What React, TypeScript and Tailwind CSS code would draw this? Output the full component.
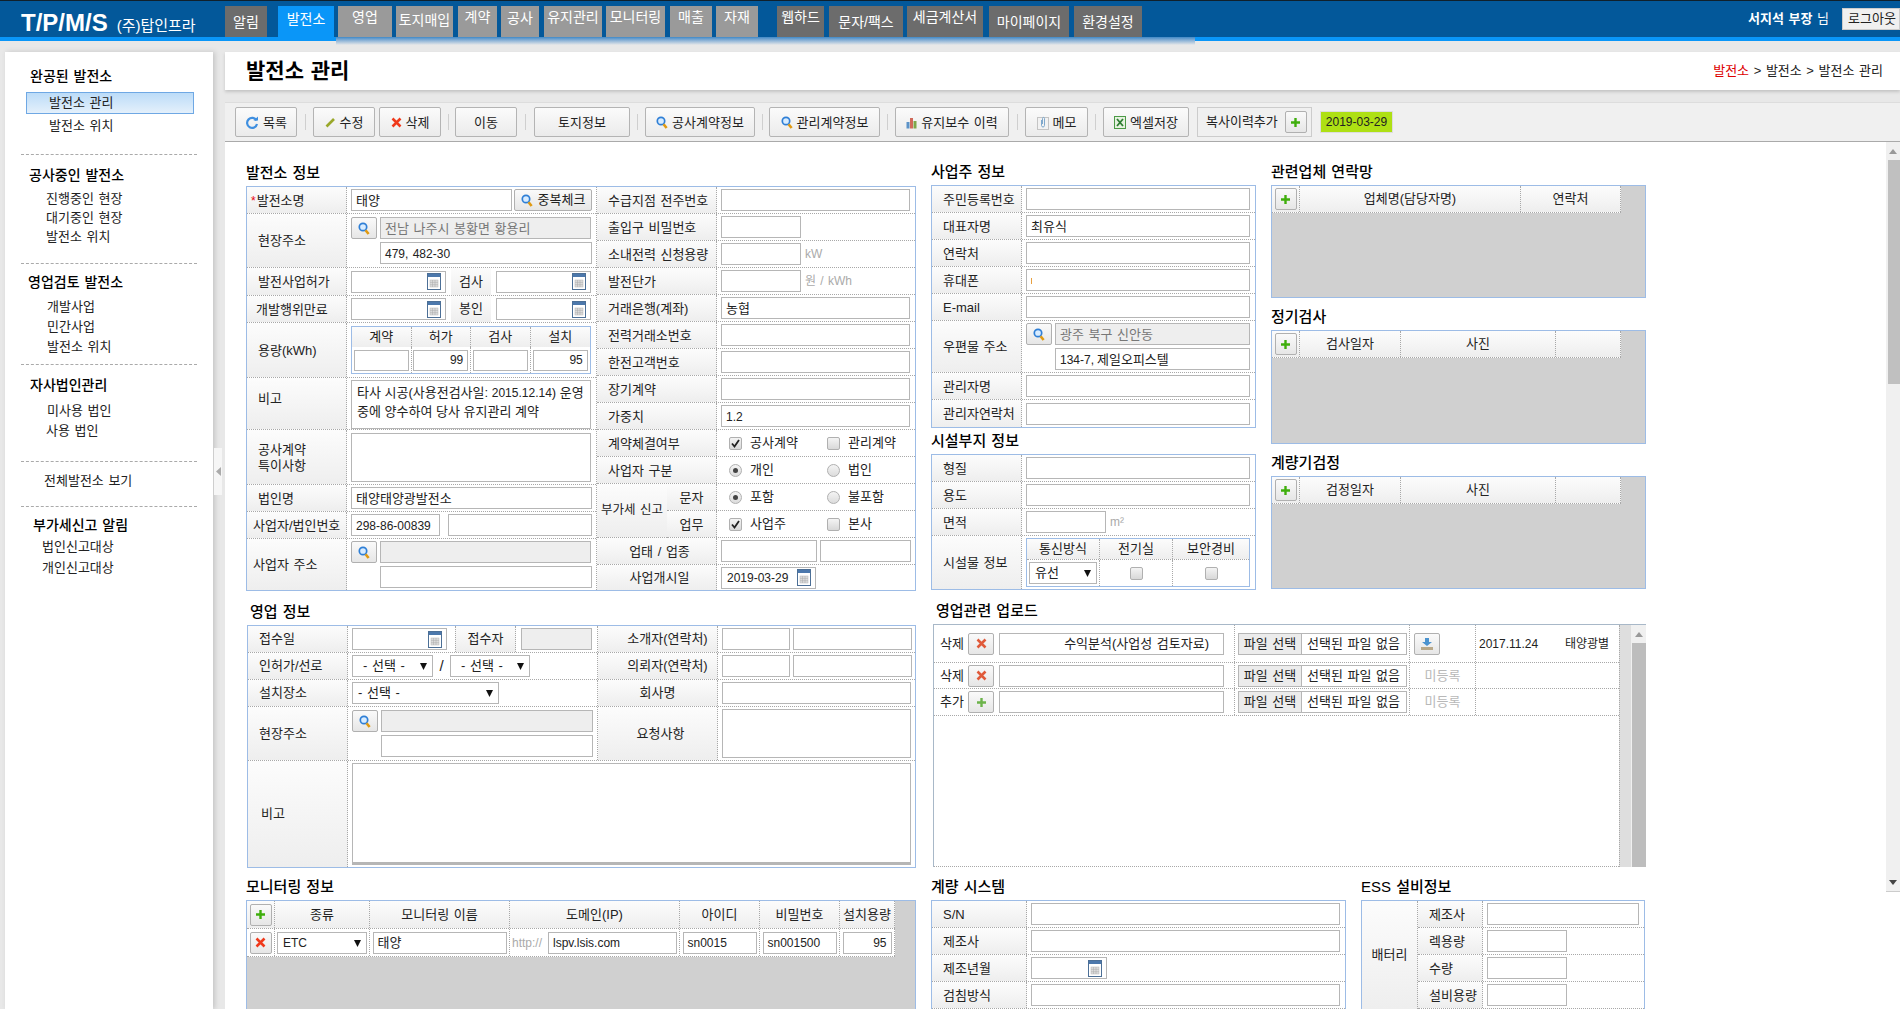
import type { ReactNode } from "react";

const label = "bg-gradient-to-b from-[#fcfcfc] to-[#eeeeee]";
const dot = "border-dotted border-[#a8a8a8]";

const Mag = () => (
  <svg width="12" height="13" viewBox="0 0 12 13" className="shrink-0">
    <circle cx="5" cy="5" r="3.7" fill="#d8ecff" stroke="#2f7fd6" strokeWidth="1.7" />
    <path d="M7.6 8.2 L10.6 12" stroke="#e09a12" strokeWidth="2.6" />
  </svg>
);

const Cal = () => (
  <svg width="14" height="17" viewBox="0 0 14 17" className="shrink-0">
    <rect x="0.5" y="0.5" width="13" height="16" fill="#fff" stroke="#4c6f96" />
    <rect x="1" y="1" width="12" height="3" fill="#4c78ac" />
    <rect x="3" y="7" width="8" height="7" fill="#dcdcdc" stroke="#b5b5b5" strokeWidth="0.5" />
    <path d="M5.5 7V14M8 7V14M3 9.4H11M3 11.7H11" stroke="#aaa" strokeWidth="0.5" />
  </svg>
);

const Plus = ({ c = "#3fae0c" }: { c?: string }) => (
  <svg width="11" height="11" viewBox="0 0 11 11">
    <path d="M5.5 1V10M1 5.5H10" stroke={c} strokeWidth="2.4" />
  </svg>
);

const Xx = ({ c = "#f0391b" }: { c?: string }) => (
  <svg width="11" height="11" viewBox="0 0 11 11">
    <path d="M1.5 1.5L9.5 9.5M9.5 1.5L1.5 9.5" stroke={c} strokeWidth="2.5" />
  </svg>
);

const Arrow = () => (
  <svg width="7" height="8" viewBox="0 0 7 8" className="shrink-0">
    <path d="M0 1H7L3.5 8Z" fill="#111" />
  </svg>
);

const Chk = ({ on }: { on?: boolean }) => (
  <div className="w-[13px] h-[13px] rounded-[2px] border border-[#b0b0b0] bg-gradient-to-b from-[#f4f4f4] to-[#d8d8d8] flex items-center justify-center">
    {on && (
      <svg width="9" height="9" viewBox="0 0 9 9">
        <path d="M1 4.5L3.5 7.5L8 1" fill="none" stroke="#222" strokeWidth="1.8" />
      </svg>
    )}
  </div>
);

const Rad = ({ on }: { on?: boolean }) => (
  <div className="w-[13px] h-[13px] rounded-full border border-[#b0b0b0] bg-gradient-to-b from-[#f4f4f4] to-[#dcdcdc] flex items-center justify-center">
    {on && <div className="w-[5px] h-[5px] rounded-full bg-[#444]" />}
  </div>
);

function Inp({ w = "flex-1", cls = "", children }: { w?: string; cls?: string; children?: ReactNode }) {
  return (
    <div className={`${w} ${cls} h-[22px] shrink-0 border border-[#b6b6b6] bg-white flex items-center px-[4px] pt-px whitespace-nowrap overflow-hidden`}>
      {children}
    </div>
  );
}

function DateInp({ w, text }: { w: string; text?: string }) {
  return (
    <div className={`${w} h-[22px] shrink-0 border border-[#b6b6b6] bg-white flex items-center justify-between pl-[5px] pr-[4px] text-xs`}>
      <span>{text}</span>
      <Cal />
    </div>
  );
}

function Sel({ w, children }: { w: string; children?: ReactNode }) {
  return (
    <div className={`${w} h-[22px] shrink-0 border border-[#b6b6b6] bg-white flex items-center justify-between pl-[5px] pr-[5px]`}>
      <span>{children}</span>
      <Arrow />
    </div>
  );
}

function IconBtn({ w = "w-[26px]", children }: { w?: string; children?: ReactNode }) {
  return (
    <div className={`${w} h-[22px] shrink-0 border border-[#b0b0b0] rounded-[2px] bg-gradient-to-b from-[#fafafa] to-[#e6e6e6] flex items-center justify-center gap-[5px]`}>
      {children}
    </div>
  );
}

function Row({ name, cols, h = "h-[27px]", lc = "pl-[11px]", last, children }: { name?: ReactNode; cols: string; h?: string; lc?: string; last?: boolean; children?: ReactNode }) {
  return (
    <div className={`grid ${cols} ${h} ${last ? "" : `border-b ${dot}`}`}>
      <div className={`flex items-center pt-px whitespace-nowrap ${lc} ${label} border-r ${dot}`}>{name}</div>
      <div className="flex items-center pl-[4px] pr-[5px] min-w-0">{children}</div>
    </div>
  );
}

function Title({ children, cls = "" }: { children: ReactNode; cls?: string }) {
  return <div className={`h-[26px] flex items-center text-[15px] font-medium text-black ${cls}`}>{children}</div>;
}

const Gray = ({ children }: { children: ReactNode }) => <span className="text-[#aaaaaa] text-xs ml-[4px]">{children}</span>;

const tabs = [
  { t: "알림", c: "w-[42px] ml-[225px] bg-[#6c6c6c] pt-[6px]" },
  { t: "발전소", c: "w-[56px] ml-[11px] bg-[#0a96f8] pt-[3px]" },
  { t: "영업", c: "w-[54px] ml-[4px] bg-[#9a9a9a] pt-[1px]" },
  { t: "토지매입", c: "w-[57px] ml-[4px] bg-[#9a9a9a] pt-[4px]" },
  { t: "계약", c: "w-[39px] ml-[5px] bg-[#9a9a9a] pt-[1px]" },
  { t: "공사", c: "w-[38px] ml-[4px] bg-[#9a9a9a] pt-[2px]" },
  { t: "유지관리", c: "w-[58px] ml-[5px] bg-[#9a9a9a] pt-[1px]" },
  { t: "모니터링", c: "w-[59px] ml-[4px] bg-[#9a9a9a] pt-[1px]" },
  { t: "매출", c: "w-[42px] ml-[5px] bg-[#9a9a9a] pt-[1px]" },
  { t: "자재", c: "w-[42px] ml-[4px] bg-[#9a9a9a] pt-[1px]" },
  { t: "웹하드", c: "w-[47px] ml-[19px] bg-[#6c6c6c] pt-[1px]" },
  { t: "문자/팩스", c: "w-[74px] ml-[5px] bg-[#6c6c6c] pt-[6px]" },
  { t: "세금계산서", c: "w-[76px] ml-[4px] bg-[#6c6c6c] pt-[1px]" },
  { t: "마이페이지", c: "w-[80px] ml-[6px] bg-[#6c6c6c] pt-[6px]" },
  { t: "환경설정", c: "w-[68px] ml-[5px] bg-[#6c6c6c] pt-[6px]" },
];

const Sep = ({ w }: { w: string }) => (
  <div className={`${w} flex justify-center`}>
    <div className="w-px h-[16px] bg-[#cfcfcf]" />
  </div>
);

function Tb({ w, icon, children }: { w: string; icon?: ReactNode; children: ReactNode }) {
  return (
    <div className={`${w} h-[30px] shrink-0 border border-[#b4b4b4] rounded-[2px] bg-gradient-to-b from-[#fbfbfb] to-[#ebebeb] flex items-center justify-center gap-[4px] pt-px whitespace-nowrap`}>
      {icon}
      {children}
    </div>
  );
}

function Side({ cls, children }: { cls: string; children: ReactNode }) {
  return <div className={`h-[20px] flex items-center whitespace-nowrap ${cls}`}>{children}</div>;
}

function Head({ cls, children }: { cls: string; children: ReactNode }) {
  return <div className={`h-[20px] flex items-center whitespace-nowrap text-[14px] font-medium text-black ${cls}`}>{children}</div>;
}

const Dash = ({ cls }: { cls: string }) => <div className={`mx-[16px] border-t border-dashed border-[#aaaaaa] ${cls}`} />;

const A = "grid-cols-[100px_1fr]";
const R = "grid-cols-[120px_1fr]";
const B = "grid-cols-[90px_1fr]";

function PlantInfo() {
  return (
    <div className="w-[670px]">
      <Title>발전소 정보</Title>
      <div className="border border-[#9dbce6] bg-white flex">
        <div className="w-[350px] border-r border-dotted border-[#a8a8a8]">
          <Row cols={A} lc="pl-[4px]" name={<><span className="text-red-600 text-xs mr-px">*</span>발전소명</>}>
            <Inp w="w-[161px]">태양</Inp>
            <div className="ml-[2px]">
              <IconBtn w="w-[78px]"><Mag />중복체크</IconBtn>
            </div>
          </Row>
          <Row cols={A} h="h-[54px]" name="현장주소">
            <div className="flex flex-col gap-[3px] w-full">
              <div className="flex gap-[3px]">
                <IconBtn><Mag /></IconBtn>
                <Inp cls="!bg-[#eeeeee] text-[#777777]">전남 나주시 봉황면 황용리</Inp>
              </div>
              <Inp w="w-[212px]" cls="ml-[29px] text-xs">479, 482-30</Inp>
            </div>
          </Row>
          <Row cols={A} h="h-[28px]" name="발전사업허가">
            <DateInp w="w-[95px]" />
            <div className={`w-[41px] ml-[5px] h-full flex items-center justify-center ${label}`}>검사</div>
            <div className="ml-[5px]"><DateInp w="w-[95px]" /></div>
          </Row>
          <Row cols={A} lc="pl-[9px]" name="개발행위만료">
            <DateInp w="w-[95px]" />
            <div className={`w-[41px] ml-[5px] h-full flex items-center justify-center ${label}`}>봉인</div>
            <div className="ml-[5px]"><DateInp w="w-[95px]" /></div>
          </Row>
          <Row cols={A} h="h-[55px]" name="용량(kWh)">
            <div className="w-[241px] h-[48px] border border-[#9dbce6]">
              <div className={`grid grid-cols-4 h-[20px] border-b ${dot}`}>
                {["계약", "허가", "검사", "설치"].map((t, i) => (
                  <div key={t} className={`flex items-center justify-center ${label} ${i < 3 ? `border-r ${dot}` : ""}`}>{t}</div>
                ))}
              </div>
              <div className="grid grid-cols-4 h-[26px]">
                {["", "99", "", "95"].map((t, i) => (
                  <div key={i} className={`flex items-center justify-center ${i < 3 ? `border-r ${dot}` : ""}`}>
                    <div className="w-[55px] h-[21px] border border-[#b6b6b6] text-xs text-right pr-[4px] leading-[19px]">{t}</div>
                  </div>
                ))}
              </div>
            </div>
          </Row>
          <Row cols={A} h="h-[52px]" name={<span className="-mt-[10px]">비고</span>}>
            <div className="w-[243px] h-[49px] border border-[#b6b6b6] px-[5px] leading-[19px] pt-[2px] whitespace-nowrap overflow-hidden mt-[2px] [word-spacing:0]">
              타사 시공(사용전검사일: <span className="text-xs">2015.12.14</span>) 운영
              <br />
              중에 양수하여 당사 유지관리 계약
            </div>
          </Row>
          <Row cols={A} h="h-[55px]" name={<span className="leading-[16px]">공사계약<br />특이사항</span>}>
            <div className="w-[243px] h-[49px] border border-[#b6b6b6]" />
          </Row>
          <Row cols={A} name="법인명"><Inp w="w-[241px]">태양태양광발전소</Inp></Row>
          <Row cols={A} lc="pl-[6px]" name="사업자/법인번호">
            <Inp w="w-[89px]" cls="text-xs">298-86-00839</Inp>
            <Inp w="w-[144px]" cls="ml-[8px]" />
          </Row>
          <Row cols={A} h="h-[51px]" lc="pl-[6px]" last name="사업자 주소">
            <div className="flex flex-col gap-[3px] w-full">
              <div className="flex gap-[3px]">
                <IconBtn><Mag /></IconBtn>
                <Inp cls="!bg-[#eeeeee]" />
              </div>
              <Inp w="w-[212px]" cls="ml-[29px]" />
            </div>
          </Row>
        </div>
        <div className="w-[318px]">
          <Row cols={R} name="수급지점 전주번호"><Inp /></Row>
          <Row cols={R} name="출입구 비밀번호"><Inp w="w-[80px]" /></Row>
          <Row cols={R} name="소내전력 신청용량"><Inp w="w-[80px]" /><Gray>kW</Gray></Row>
          <Row cols={R} name="발전단가"><Inp w="w-[80px]" /><Gray>원 / kWh</Gray></Row>
          <Row cols={R} name="거래은행(계좌)"><Inp>농협</Inp></Row>
          <Row cols={R} name="전력거래소번호"><Inp /></Row>
          <Row cols={R} name="한전고객번호"><Inp /></Row>
          <Row cols={R} name="장기계약"><Inp /></Row>
          <Row cols={R} name="가중치"><Inp cls="text-xs">1.2</Inp></Row>
          <Row cols={R} name="계약체결여부">
            <div className="ml-[8px]"><Chk on /></div>
            <span className="ml-[8px] w-[77px]">공사계약</span>
            <Chk />
            <span className="ml-[8px]">관리계약</span>
          </Row>
          <Row cols={R} name="사업자 구분">
            <div className="ml-[8px]"><Rad on /></div>
            <span className="ml-[8px] w-[77px]">개인</span>
            <Rad />
            <span className="ml-[8px]">법인</span>
          </Row>
          <div className="flex">
            <div className={`w-[70px] h-[54px] flex items-center pl-[4px] whitespace-nowrap ${label} border-b ${dot} text-[12.5px]`}>부가세 신고</div>
            <div className="flex-1">
              <Row cols="grid-cols-[50px_1fr]" lc="justify-center" name="문자">
                <div className="ml-[8px]"><Rad on /></div>
                <span className="ml-[8px] w-[77px]">포함</span>
                <Rad />
                <span className="ml-[8px]">불포함</span>
              </Row>
              <Row cols="grid-cols-[50px_1fr]" lc="justify-center" name="업무">
                <div className="ml-[8px]"><Chk on /></div>
                <span className="ml-[8px] w-[77px]">사업주</span>
                <Chk />
                <span className="ml-[8px]">본사</span>
              </Row>
            </div>
          </div>
          <Row cols={R} lc="justify-center pl-[6px]" name="업태 / 업종">
            <Inp w="w-[96px]" />
            <Inp w="w-[91px]" cls="ml-[3px]" />
          </Row>
          <Row cols={R} h="h-[25px]" lc="justify-center pl-[6px]" last name="사업개시일">
            <DateInp w="w-[95px]" text="2019-03-29" />
          </Row>
        </div>
      </div>
    </div>
  );
}

function OwnerInfo() {
  return (
    <div className="w-[325px] ml-[15px] -mt-px">
      <Title>사업주 정보</Title>
      <div className="border border-[#9dbce6] bg-white">
        <Row cols={B} name="주민등록번호"><Inp /></Row>
        <Row cols={B} name="대표자명"><Inp>최유식</Inp></Row>
        <Row cols={B} name="연락처"><Inp /></Row>
        <Row cols={B} name="휴대폰"><Inp><span className="w-px h-[6px] bg-[#e8a040]" /></Inp></Row>
        <Row cols={B} name="E-mail"><Inp /></Row>
        <Row cols={B} h="h-[52px]" name="우편물 주소">
          <div className="flex flex-col gap-[3px] w-full">
            <div className="flex gap-[3px]">
              <IconBtn><Mag /></IconBtn>
              <Inp cls="!bg-[#eeeeee] text-[#777777]">광주 북구 신안동</Inp>
            </div>
            <Inp w="w-[195px]" cls="ml-[29px]"><span className="text-xs mr-[3px]">134-7,</span>제일오피스텔</Inp>
          </div>
        </Row>
        <Row cols={B} name="관리자명"><Inp /></Row>
        <Row cols={B} last name="관리자연락처"><Inp /></Row>
      </div>
      <Title>시설부지 정보</Title>
      <div className="border border-[#9dbce6] bg-white">
        <Row cols={B} name="형질"><Inp /></Row>
        <Row cols={B} name="용도"><Inp /></Row>
        <Row cols={B} name="면적"><Inp w="w-[80px]" /><Gray>m²</Gray></Row>
        <Row cols={B} h="h-[53px]" last name="시설물 정보">
          <div className="w-[224px] h-[49px] border border-[#9dbce6]">
            <div className={`grid grid-cols-[73px_73px_1fr] h-[21px] border-b ${dot}`}>
              {["통신방식", "전기실", "보안경비"].map((t, i) => (
                <div key={t} className={`flex items-center justify-center ${label} ${i < 2 ? `border-r ${dot}` : ""}`}>{t}</div>
              ))}
            </div>
            <div className="grid grid-cols-[73px_73px_1fr] h-[26px]">
              <div className={`flex items-center justify-center border-r ${dot}`}><Sel w="w-[68px]">유선</Sel></div>
              <div className={`flex items-center justify-center border-r ${dot}`}><Chk /></div>
              <div className="flex items-center justify-center"><Chk /></div>
            </div>
          </div>
        </Row>
      </div>
    </div>
  );
}

function Contact({ title, cols, heads, h, cls = "" }: { title: string; cols: string; heads: string[]; h: string; cls?: string }) {
  return (
    <div className={cls}>
      <Title>{title}</Title>
      <div className={`border border-[#9dbce6] bg-[#d0d0d0] ${h}`}>
        <div className={`grid ${cols} w-[349px] h-[27px] bg-white border-b ${dot}`}>
          <div className={`flex items-center justify-center ${label} border-r ${dot}`}>
            <IconBtn w="w-[22px]"><Plus /></IconBtn>
          </div>
          {heads.map((t, i) => (
            <div key={i} className={`flex items-center justify-center ${label} border-r ${dot}`}>{t}</div>
          ))}
        </div>
      </div>
    </div>
  );
}

function SalesInfo() {
  const C = "grid-cols-[100px_250px_120px_1fr]";
  const cell = "flex items-center pl-[4px] pr-[4px] min-w-0";
  const name = `flex items-center whitespace-nowrap ${label} border-r ${dot}`;
  return (
    <div className="w-[670px] pl-px">
      <Title cls="pl-[3px]">영업 정보</Title>
      <div className="border border-[#9dbce6] bg-white">
        <div className={`grid ${C} h-[27px] border-b ${dot}`}>
          <div className={`${name} pl-[11px]`}>접수일</div>
          <div className={`${cell} border-r ${dot}`}>
            <DateInp w="w-[95px]" />
            <div className={`w-[61px] ml-[8px] h-full flex items-center justify-center ${label} border-x ${dot}`}>접수자</div>
            <Inp w="w-[71px]" cls="ml-[5px] !bg-[#eeeeee]" />
          </div>
          <div className={`${name} justify-center pl-[20px]`}>소개자(연락처)</div>
          <div className={cell}><Inp w="w-[68px]" /><Inp w="w-[119px]" cls="ml-[3px]" /></div>
        </div>
        <div className={`grid ${C} h-[27px] border-b ${dot}`}>
          <div className={`${name} pl-[11px]`}>인허가/선로</div>
          <div className={`${cell} border-r ${dot}`}>
            <Sel w="w-[81px]"><span className="pl-[5px]">- 선택 -</span></Sel>
            <span className="w-[17px] text-center text-[15px]">/</span>
            <Sel w="w-[80px]"><span className="pl-[5px]">- 선택 -</span></Sel>
          </div>
          <div className={`${name} justify-center pl-[20px]`}>의뢰자(연락처)</div>
          <div className={cell}><Inp w="w-[68px]" /><Inp w="w-[119px]" cls="ml-[3px]" /></div>
        </div>
        <div className={`grid ${C} h-[27px] border-b ${dot}`}>
          <div className={`${name} pl-[11px]`}>설치장소</div>
          <div className={`${cell} border-r ${dot}`}><Sel w="w-[147px]">- 선택 -</Sel></div>
          <div className={`${name} justify-center`}>회사명</div>
          <div className={cell}><Inp /></div>
        </div>
        <div className={`grid ${C} h-[54px] border-b ${dot}`}>
          <div className={`${name} pl-[11px]`}>현장주소</div>
          <div className={`${cell} border-r ${dot}`}>
            <div className="flex flex-col gap-[3px] w-full">
              <div className="flex gap-[3px]">
                <IconBtn><Mag /></IconBtn>
                <Inp cls="!bg-[#eeeeee]" />
              </div>
              <Inp w="w-[212px]" cls="ml-[29px]" />
            </div>
          </div>
          <div className={`${name} justify-center pl-[6px]`}>요청사항</div>
          <div className={cell}><div className="w-full h-[49px] border border-[#b6b6b6]" /></div>
        </div>
        <div className="grid grid-cols-[100px_1fr] h-[106px]">
          <div className={`${name} pl-[13px]`}>비고</div>
          <div className="pl-[4px] pr-[4px] pt-[2px]">
            <div className="h-[102px] border border-[#b6b6b6] border-b-[3px]" />
          </div>
        </div>
      </div>
    </div>
  );
}

function Upload() {
  const C = "grid-cols-[301px_175px_66px_1fr]";
  const FilePick = () => (
    <div className="flex h-[22px] w-[169px] border border-[#b6b6b6] whitespace-nowrap">
      <div className="w-[63px] bg-[#ececec] border-r border-[#b6b6b6] flex items-center justify-center">파일 선택</div>
      <div className="flex-1 flex items-center pl-[5px]">선택된 파일 없음</div>
    </div>
  );
  const rows = [
    { h: "h-[38px]", t: "삭제", i: <Xx c="#e05a3a" />, v: "수익분석(사업성 검토자료)" },
    { h: "h-[26px]", t: "삭제", i: <Xx c="#e05a3a" /> },
    { h: "h-[27px]", t: "추가", i: <Plus c="#6cb34a" /> },
  ];
  return (
    <div className="ml-[17px] w-[713px] -mt-px">
      <Title cls="pl-[3px]">영업관련 업로드</Title>
      <div className="h-[243px] border-t border-l border-[#a8b8c8] flex overflow-hidden">
        <div className={`w-[685px] h-full border-b ${dot}`}>
          {rows.map((r, i) => (
            <div key={i} className={`grid ${C} ${r.h} border-b ${dot}`}>
              <div className={`flex items-center pl-[6px] border-r ${dot}`}>
                <span className="w-[28px]">{r.t}</span>
                <IconBtn>{r.i}</IconBtn>
                <Inp w="w-[225px]" cls="ml-[5px] justify-end pr-[14px]">{r.v}</Inp>
              </div>
              <div className={`flex items-center pl-[3px] border-r ${dot}`}><FilePick /></div>
              <div className={`flex items-center border-r ${dot} ${i === 0 ? "pl-[4px]" : "justify-center"}`}>
                {i === 0 ? (
                  <IconBtn>
                    <svg width="14" height="14" viewBox="0 0 14 14">
                      <path d="M5 1H9V5H12L7 9L2 5H5Z" fill="#4b93cf" />
                      <rect x="1" y="10" width="12" height="3" fill="#b9a98a" />
                    </svg>
                  </IconBtn>
                ) : (
                  <span className="text-[#b8b8b8]">미등록</span>
                )}
              </div>
              {i === 0 ? (
                <div className="flex items-center pl-[3px] text-xs whitespace-nowrap">
                  <span className="w-[86px]">2017.11.24</span>
                  <span className="text-[12px]">태양광별</span>
                </div>
              ) : <div />}
            </div>
          ))}
        </div>
        <div className={`w-[12px] bg-[#dedede] border-l ${dot}`} />
        <div className="w-[15px] bg-[#f0f0f0] flex flex-col">
          <div className="h-[18px] flex items-center justify-center">
            <svg width="8" height="5" viewBox="0 0 8 5"><path d="M4 0L8 5H0Z" fill="#999" /></svg>
          </div>
          <div className="flex-1 bg-[#bdbdbd] ml-px" />
        </div>
      </div>
    </div>
  );
}

function Monitoring() {
  const C = "grid-cols-[28px_95px_140px_170px_80px_80px_55px]";
  return (
    <div className="w-[670px]">
      <Title>모니터링 정보</Title>
      <div className="h-[200px] border border-[#9dbce6] bg-[#d0d0d0]">
        <div className={`grid ${C} w-[648px] h-[28px] bg-white border-b ${dot}`}>
          <div className={`flex items-center justify-center ${label} border-r ${dot}`}>
            <IconBtn w="w-[22px]"><Plus /></IconBtn>
          </div>
          {["종류", "모니터링 이름", "도메인(IP)", "아이디", "비밀번호", "설치용량"].map((t) => (
            <div key={t} className={`flex items-center justify-center whitespace-nowrap ${label} border-r ${dot}`}>{t}</div>
          ))}
        </div>
        <div className={`grid ${C} w-[648px] h-[28px] bg-white border-b ${dot}`}>
          <div className={`flex items-center justify-center border-r ${dot}`}>
            <IconBtn w="w-[22px]"><Xx /></IconBtn>
          </div>
          <div className={`flex items-center justify-center border-r ${dot}`}><Sel w="w-[90px]"><span className="text-xs">ETC</span></Sel></div>
          <div className={`flex items-center justify-center border-r ${dot}`}><Inp w="w-[134px]">태양</Inp></div>
          <div className={`flex items-center pl-[2px] border-r ${dot}`}>
            <span className="text-xs text-[#aaaaaa] w-[36px]">http://</span>
            <Inp w="w-[129px]" cls="text-xs">lspv.lsis.com</Inp>
          </div>
          <div className={`flex items-center justify-center border-r ${dot}`}><Inp w="w-[74px]" cls="text-xs">sn0015</Inp></div>
          <div className={`flex items-center justify-center border-r ${dot}`}><Inp w="w-[74px]" cls="text-xs">sn001500</Inp></div>
          <div className={`flex items-center justify-center border-r ${dot}`}><Inp w="w-[49px]" cls="text-xs justify-end">95</Inp></div>
        </div>
      </div>
    </div>
  );
}

function Meter() {
  const C = "grid-cols-[95px_1fr]";
  return (
    <div className="w-[415px] ml-[15px]">
      <Title>계량 시스템</Title>
      <div className="h-[200px] border border-[#9dbce6] bg-white">
        <Row cols={C} name="S/N"><Inp /></Row>
        <Row cols={C} name="제조사"><Inp /></Row>
        <Row cols={C} name="제조년월"><DateInp w="w-[76px]" /></Row>
        <Row cols={C} name="검침방식"><Inp /></Row>
      </div>
    </div>
  );
}

function Ess() {
  const C = "grid-cols-[65px_1fr]";
  return (
    <div className="w-[284px] ml-[15px]">
      <Title>ESS 설비정보</Title>
      <div className="h-[200px] border border-[#9dbce6] bg-white flex">
        <div className={`w-[56px] h-[108px] flex items-center justify-center ${label} border-r ${dot}`}>배터리</div>
        <div className="flex-1">
          <Row cols={C} name="제조사"><Inp /></Row>
          <Row cols={C} name="렉용량"><Inp w="w-[80px]" /></Row>
          <Row cols={C} name="수량"><Inp w="w-[80px]" /></Row>
          <Row cols={C} name="설비용량"><Inp w="w-[80px]" /></Row>
        </div>
      </div>
    </div>
  );
}

export default function App() {
  return (
    <div
      className="w-[1900px] h-[1009px] overflow-hidden bg-[#e8e8e8] text-[13px] text-[#222222] flex flex-col [word-spacing:1px]"
      style={{ fontFamily: '"Liberation Sans", "Noto Sans CJK KR", sans-serif' }}
    >
      <header className="h-[37px] shrink-0 bg-[#03589a] border-t border-[#10202c] flex relative">
        <div className="absolute left-[21px] top-[4px] flex items-baseline text-white whitespace-nowrap">
          <span className="text-[24px] font-bold">T/P/M/S</span>
          <span className="text-[15px] ml-[9px]">(주)탑인프라</span>
        </div>
        <div className="flex items-end h-full">
          {tabs.map((t) => (
            <div key={t.t} className={`${t.c} h-[31px] text-center text-[14px] text-white whitespace-nowrap`}>{t.t}</div>
          ))}
        </div>
        <div className="absolute right-0 top-[7px] flex items-center text-white">
          <span className="font-bold mr-[13px] whitespace-nowrap">서지석 부장 <span className="font-normal">님</span></span>
          <div className="w-[58px] h-[22px] bg-[#f0f0f0] border border-[#cccccc] text-[#222222] pl-[5px] flex items-center whitespace-nowrap">로그아웃</div>
        </div>
      </header>
      <div className="h-[8px] shrink-0 flex">
        <div className="w-[336px] h-[4px] bg-[#0a96f8]" />
        <div className="w-[859px] h-[8px] bg-gradient-to-b from-[#4089c6] to-[#e8e8e8]" />
        <div className="flex-1 h-[4px] bg-[#0a96f8]" />
      </div>
      <div className="flex-1 flex pt-[7px] min-h-0">
        <aside className="w-[208px] ml-[5px] bg-white shadow-[2px_0_5px_#c4c4c4] relative shrink-0">
          <div className="absolute -right-[9px] top-[396px] w-[8px] h-[47px] bg-[#f6f6f6] flex items-center justify-center">
            <svg width="5" height="9" viewBox="0 0 5 9"><path d="M5 0V9L0 4.5Z" fill="#aaa" /></svg>
          </div>
          <Head cls="pl-[25px] mt-[14px]">완공된 발전소</Head>
          <div className="ml-[21px] mr-[19px] mt-[6px] h-[22px] border border-[#6fa8e4] bg-gradient-to-b from-[#bcdcf8] to-[#e4f0fb] pl-[22px] flex items-center">발전소 관리</div>
          <Side cls="pl-[44px] mt-[2px]">발전소 위치</Side>
          <Dash cls="mt-[18px]" />
          <Head cls="pl-[24px] mt-[10px]">공사중인 발전소</Head>
          <Side cls="pl-[41px] mt-[4px] !h-[19px]">진행중인 현장</Side>
          <Side cls="pl-[41px] !h-[19px]">대기중인 현장</Side>
          <Side cls="pl-[41px] !h-[19px]">발전소 위치</Side>
          <Dash cls="mt-[17px]" />
          <Head cls="pl-[23px] mt-[8px]">영업검토 발전소</Head>
          <Side cls="pl-[42px] mt-[5px]">개발사업</Side>
          <Side cls="pl-[42px]">민간사업</Side>
          <Side cls="pl-[42px]">발전소 위치</Side>
          <Dash cls="mt-[7px]" />
          <Head cls="pl-[25px] mt-[10px]">자사법인관리</Head>
          <Side cls="pl-[42px] mt-[6px]">미사용 법인</Side>
          <Side cls="pl-[41px]">사용 법인</Side>
          <Dash cls="mt-[20px]" />
          <Side cls="pl-[39px] mt-[9px]">전체발전소 보기</Side>
          <Dash cls="mt-[15px]" />
          <Head cls="pl-[28px] mt-[8px]">부가세신고 알림</Head>
          <Side cls="pl-[37px] mt-[2px]">법인신고대상</Side>
          <Side cls="pl-[37px] mt-[1px]">개인신고대상</Side>
        </aside>
        <main className="ml-[12px] w-[1675px] flex flex-col min-h-0">
          <div className="h-[38px] shrink-0 bg-white shadow-[0_2px_3px_#c4c4c4] flex items-center justify-between pl-[21px] pr-[17px]">
            <h1 className="text-[21px] font-bold text-black">발전소 관리</h1>
            <div className="whitespace-nowrap">
              <span className="text-[#dd0000]">발전소</span> &gt; 발전소 &gt; 발전소 관리
            </div>
          </div>
          <div className="h-[40px] shrink-0 mt-[12px] bg-[#f0f0f0] border-t border-b border-t-[#dddddd] border-b-[#aaaaaa] flex items-center pl-[10px]">
            <Tb w="w-[62px]" icon={
              <svg width="14" height="14" viewBox="0 0 14 14"><path d="M11.5 4.5A5 5 0 1 0 12 8" fill="none" stroke="#3f8fe0" strokeWidth="2.2" /><path d="M8.5 4.5H13V0.5Z" fill="#3f8fe0" /></svg>
            }>목록</Tb>
            <Sep w="w-[16px]" />
            <Tb w="w-[62px]" icon={
              <svg width="11" height="11" viewBox="0 0 11 11"><path d="M1.5 9.5L9 2" stroke="#9aa82a" strokeWidth="2.6" /></svg>
            }>수정</Tb>
            <div className="w-[4px]" />
            <Tb w="w-[62px]" icon={<Xx />}>삭제</Tb>
            <Sep w="w-[14px]" />
            <Tb w="w-[62px]">이동</Tb>
            <Sep w="w-[17px]" />
            <Tb w="w-[96px]">토지정보</Tb>
            <Sep w="w-[15px]" />
            <Tb w="w-[110px]" icon={<Mag />}>공사계약정보</Tb>
            <Sep w="w-[14px]" />
            <Tb w="w-[111px]" icon={<Mag />}>관리계약정보</Tb>
            <Sep w="w-[15px]" />
            <Tb w="w-[114px]" icon={
              <svg width="11" height="12" viewBox="0 0 11 12"><rect x="0.5" y="5" width="3" height="6.5" fill="#5c93c8" /><rect x="4" y="1" width="3" height="10.5" fill="#d06a5a" /><rect x="7.5" y="4" width="3" height="7.5" fill="#7fa84a" /></svg>
            }>유지보수 이력</Tb>
            <Sep w="w-[16px]" />
            <Tb w="w-[63px]" icon={
              <svg width="12" height="14" viewBox="0 0 12 14"><rect x="0.5" y="1.5" width="11" height="12" fill="#f2f2f2" stroke="#c4c4c4" /><path d="M4.5 4V9.5C4.5 11.5 7.5 11.5 7.5 9.5V2.5C7.5 1 5.5 1 5.5 2.5V8" fill="none" stroke="#7fa8cc" /></svg>
            }>메모</Tb>
            <Sep w="w-[15px]" />
            <Tb w="w-[86px]" icon={
              <svg width="12" height="13" viewBox="0 0 12 13"><rect x="0.5" y="0.5" width="11" height="12" fill="#e6f2e0" stroke="#4c9a46" /><path d="M3 3L9 10M9 3L3 10" stroke="#2e7d32" strokeWidth="1.8" /></svg>
            }>엑셀저장</Tb>
            <div className="ml-[8px] w-[115px] h-[30px] border border-[#cccccc] bg-[#f0f0f0] flex items-center pl-[8px] whitespace-nowrap">
              복사이력추가
              <div className="ml-[7px]"><IconBtn w="w-[22px]"><Plus /></IconBtn></div>
            </div>
            <div className="ml-[8px] w-[73px] h-[22px] bg-[#aee014] border border-[#dddddd] flex items-center justify-center text-xs">2019-03-29</div>
          </div>
          <div className="flex-1 flex min-h-0 bg-white">
            <div className="flex-1 pl-[21px] pt-[18px] overflow-hidden">
              <div className="flex">
                <PlantInfo />
                <OwnerInfo />
                <div className="w-[375px] ml-[15px] -mt-px">
                  <Contact title="관련업체 연락망" h="h-[113px]" cols="grid-cols-[28px_221px_100px]" heads={["업체명(담당자명)", "연락처"]} />
                  <Contact title="정기검사" cls="mt-[6px]" h="h-[114px]" cols="grid-cols-[28px_101px_155px_65px]" heads={["검사일자", "사진", ""]} />
                  <Contact title="계량기검정" cls="mt-[6px]" h="h-[113px]" cols="grid-cols-[28px_101px_155px_65px]" heads={["검정일자", "사진", ""]} />
                </div>
              </div>
              <div className="flex mt-[8px]">
                <SalesInfo />
                <Upload />
              </div>
              <div className="flex mt-[6px]">
                <Monitoring />
                <Meter />
                <Ess />
              </div>
            </div>
            <div className="w-[14px] shrink-0">
              <div className="h-[749px] bg-[#f0f0f0] flex flex-col">
                <div className="h-[18px] flex items-center justify-center">
                  <svg width="8" height="5" viewBox="0 0 8 5"><path d="M4 0L8 5H0Z" fill="#999" /></svg>
                </div>
                <div className="h-[224px] ml-[2px] bg-[#c0c0c0]" />
                <div className="flex-1" />
                <div className="h-[18px] flex items-center justify-center">
                  <svg width="8" height="5" viewBox="0 0 8 5"><path d="M0 0H8L4 5Z" fill="#444" /></svg>
                </div>
              </div>
              <div className="h-px bg-[#cccccc]" />
            </div>
          </div>
        </main>
      </div>
    </div>
  );
}
